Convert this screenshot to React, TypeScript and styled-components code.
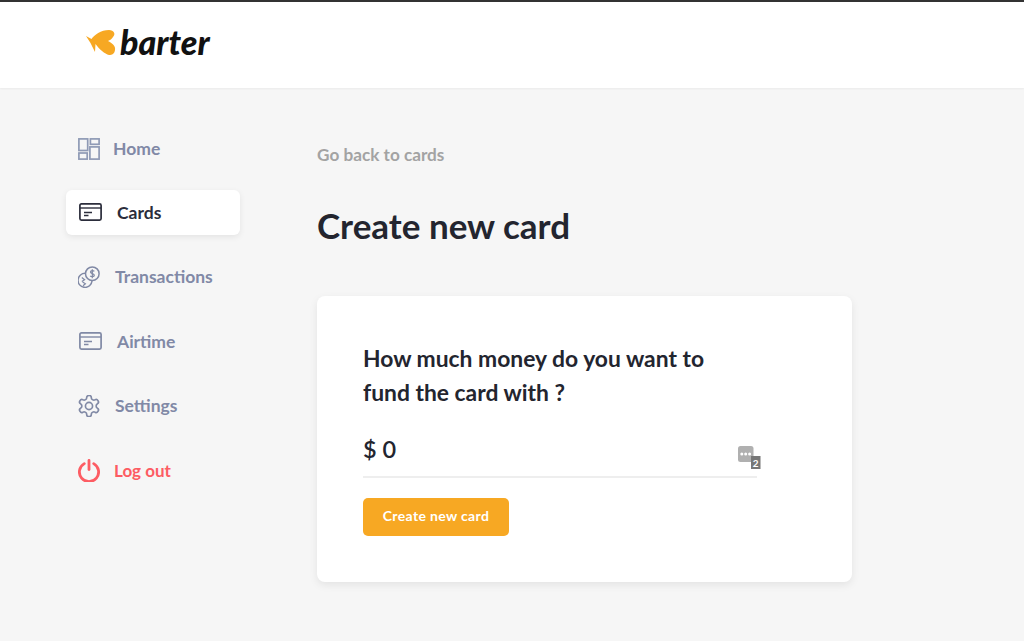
import styled, { createGlobalStyle } from 'styled-components'
import type { ReactNode } from 'react'

const GlobalStyle = createGlobalStyle`
    html, body {
        margin: 0;
        padding: 0;
        background: #f6f6f6;
        font-family: Lato, "Liberation Sans", sans-serif;
    }
    * {
        box-sizing: border-box;
    }
`

const Page = styled.div`
    width: 1024px;
    height: 641px;
    overflow: hidden;
    background: #f6f6f6;
`

const Header = styled.header`
    height: 88px;
    background: #fff;
    border-top: 2px solid #333;
    box-shadow: 0 1px 2px rgba(0, 0, 0, 0.05);
    display: flex;
    align-items: center;
    padding: 0 0 6px 85px;
    gap: 3px;
`

const LogoText = styled.span`
    font-size: 34px;
    font-weight: 900;
    font-style: italic;
    line-height: 36px;
    color: #111;
`

const Body = styled.div`
    display: flex;
`

const Sidebar = styled.nav`
    width: 174px;
    margin: 37px 0 0 66px;
    display: flex;
    flex-direction: column;
    gap: 19.5px;
`

const NavItem = styled.a<{ $active?: boolean; $danger?: boolean; $gap: number }>`
    height: 45px;
    display: flex;
    align-items: center;
    gap: ${p => p.$gap}px;
    padding-left: 12px;
    border-radius: 6px;
    font-size: ${p => (p.$danger ? '17px' : '17.5px')};
    font-weight: 700;
    color: ${p => (p.$danger ? '#fd5c63' : p.$active ? '#2b2d3b' : '#8189a6')};
    background: ${p => (p.$active ? '#fff' : 'transparent')};
    box-shadow: ${p => (p.$active ? '0 2px 6px rgba(0, 0, 0, 0.08)' : 'none')};

    &:first-child {
        padding-top: 2px;
    }
`

const Main = styled.main`
    margin-left: 77px;
    width: 535px;
    padding-top: 57px;
`

const BackLink = styled.a`
    display: block;
    font-size: 17.2px;
    font-weight: 700;
    line-height: 20px;
    color: #a3a3a3;
`

const Title = styled.h1`
    margin: 38px 0 0;
    font-size: 35px;
    font-weight: 700;
    line-height: 44px;
    color: #23252f;
`

const Card = styled.section`
    margin-top: 49px;
    height: 286px;
    padding: 46px;
    background: #fff;
    border-radius: 8px;
    box-shadow: 0 3px 8px rgba(0, 0, 0, 0.08);
`

const Question = styled.h2`
    margin: -1px 0 0;
    font-size: 22.85px;
    font-weight: 700;
    line-height: 34px;
    color: #23252f;
`

const AmountField = styled.div`
    position: relative;
    width: 394px;
    height: 54px;
    margin-top: 15px;
    padding-top: 10px;
    font-size: 23.5px;
    font-weight: 600;
    line-height: 30px;
    color: #23252f;
    border-bottom: 2px solid #eeeeee;
`

const FieldIcon = styled.svg`
    position: absolute;
    right: -4px;
    top: 22px;
`

const SubmitButton = styled.button`
    display: block;
    width: 146px;
    height: 38px;
    margin-top: 20px;
    padding: 0 0 3px;
    border: 0;
    border-radius: 5px;
    background: #f7a823;
    color: #fff;
    font-family: inherit;
    font-size: 14px;
    font-weight: 700;
    letter-spacing: 0.35px;
`

const FishLogo = () => (
    <svg width="32" height="26" viewBox="0 0 32 26">
        <path
            d="M1 7 L6.5 10 C9 6 16 1 24 1 C29 1 31 5 28 8 C27 10 25 11 23 12 C27 14 31 17 30 21 C29.5 25 27 26 24 26 C20 25 14 20 10.5 15 L10 23 L5.5 14 Z"
            fill="#f7a823"
        />
    </svg>
)

const HomeIcon = () => (
    <svg width="22" height="22" viewBox="0 0 22 22" fill="none" stroke="#8f9ab5" strokeWidth="1.7">
        <rect x="0.9" y="0.9" width="8.8" height="11.6" />
        <rect x="12.4" y="0.9" width="8.7" height="5.4" />
        <rect x="0.9" y="15" width="8.3" height="6.1" />
        <rect x="11.9" y="8.9" width="9.2" height="12.2" />
    </svg>
)

const CardIcon = ({ color }: { color: string }) => (
    <svg width="24" height="18" viewBox="0 0 24 18" fill="none" stroke={color} strokeWidth="1.7">
        <rect x="1.9" y="0.9" width="21.2" height="16.2" rx="1.5" />
        <path d="M2 5 H23" strokeWidth="1.4" />
        <path d="M6 9.5 H14 M6 12.5 H10.5" strokeWidth="1.5" />
    </svg>
)

const CoinsIcon = () => (
    <svg width="22" height="22" viewBox="0 0 22 22" fill="none" stroke="#8089a5" strokeWidth="1.5">
        <circle cx="14.3" cy="7.7" r="6.8" />
        <path d="M7.6 7.4 A7 7 0 1 0 14 15" />
        <path d="M16.3 5.4 C15.6 4.4 12.6 4.3 12.5 6 C12.4 8 16.4 7.2 16.3 9.4 C16.2 11.1 13 11 12.2 9.8 M14.3 3.2 V12.2" strokeWidth="1.2" />
        <path d="M3.8 11.5 L6.6 13.7 L3.8 15.4 M4.6 16 L7.4 17.8 L5 19.8" strokeWidth="1.2" />
    </svg>
)

const GearIcon = () => (
    <svg width="22" height="22" viewBox="1.5 1.5 21 21" fill="none" stroke="#8089a5" strokeWidth="1.6" strokeLinejoin="round">
        <path d="M12.22 2h-.44a2 2 0 0 0-2 2v.18a2 2 0 0 1-1 1.73l-.43.25a2 2 0 0 1-2 0l-.15-.08a2 2 0 0 0-2.73.73l-.22.38a2 2 0 0 0 .73 2.73l.15.1a2 2 0 0 1 1 1.72v.51a2 2 0 0 1-1 1.74l-.15.09a2 2 0 0 0-.73 2.73l.22.38a2 2 0 0 0 2.73.73l.15-.08a2 2 0 0 1 2 0l.43.25a2 2 0 0 1 1 1.73V20a2 2 0 0 0 2 2h.44a2 2 0 0 0 2-2v-.18a2 2 0 0 1 1-1.73l.43-.25a2 2 0 0 1 2 0l.15.08a2 2 0 0 0 2.73-.73l.22-.39a2 2 0 0 0-.73-2.73l-.15-.08a2 2 0 0 1-1-1.74v-.5a2 2 0 0 1 1-1.74l.15-.09a2 2 0 0 0 .73-2.73l-.22-.38a2 2 0 0 0-2.73-.73l-.15.08a2 2 0 0 1-2 0l-.43-.25a2 2 0 0 1-1-1.73V4a2 2 0 0 0-2-2z" />
        <circle cx="12" cy="12" r="3.4" />
    </svg>
)

const PowerIcon = () => (
    <svg width="22" height="23" viewBox="0 0 22 23" fill="none" stroke="#fd5c63" strokeWidth="2.8" strokeLinecap="round">
        <path d="M6.3 4.6 A9.6 9.6 0 1 0 15.7 4.6" />
        <path d="M11 1.5 V10.5" />
    </svg>
)

const items: { label: string; icon: ReactNode; gap: number; active?: boolean; danger?: boolean }[] = [
    { label: 'Home', icon: <HomeIcon />, gap: 13 },
    { label: 'Cards', icon: <CardIcon color="#2b2d3b" />, gap: 15, active: true },
    { label: 'Transactions', icon: <CoinsIcon />, gap: 15 },
    { label: 'Airtime', icon: <CardIcon color="#8089a5" />, gap: 15 },
    { label: 'Settings', icon: <GearIcon />, gap: 15 },
    { label: 'Log out', icon: <PowerIcon />, gap: 14, danger: true },
]

const App = () => {
    return (
        <Page>
            <GlobalStyle />
            <Header>
                <FishLogo />
                <LogoText>barter</LogoText>
            </Header>
            <Body>
                <Sidebar>
                    {items.map(item => (
                        <NavItem key={item.label} $active={item.active} $danger={item.danger} $gap={item.gap}>
                            {item.icon}
                            {item.label}
                        </NavItem>
                    ))}
                </Sidebar>
                <Main>
                    <BackLink>Go back to cards</BackLink>
                    <Title>Create new card</Title>
                    <Card>
                        <Question>
                            How much money do you want to
                            <br />
                            fund the card with ?
                        </Question>
                        <AmountField>
                            $ 0
                            <FieldIcon width="23" height="24" viewBox="0 0 23 24">
                                <rect x="0" y="0" width="15.5" height="16" rx="2.5" fill="#b0b0b0" />
                                <circle cx="3.8" cy="8" r="1.5" fill="#fff" />
                                <circle cx="7.7" cy="8" r="1.5" fill="#fff" />
                                <circle cx="11.6" cy="8" r="1.5" fill="#fff" />
                                <rect x="13" y="10" width="9.5" height="13" fill="#777" />
                                <text x="17.7" y="20.5" fontSize="10" fontWeight="700" textAnchor="middle" fill="#fff">2</text>
                            </FieldIcon>
                        </AmountField>
                        <SubmitButton>Create new card</SubmitButton>
                    </Card>
                </Main>
            </Body>
        </Page>
    )
}

export default App
